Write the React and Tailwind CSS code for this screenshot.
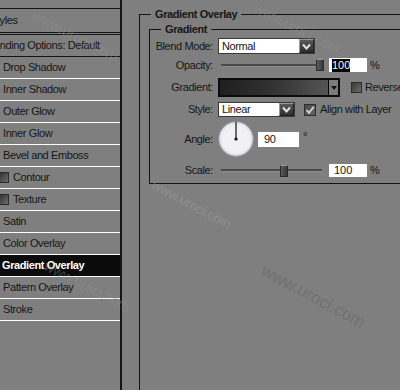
import React from "react";

function Chevron() {
  return (
    <div className="w-[15px] h-full shrink-0 bg-gradient-to-b from-[#5c5c5c] to-[#2e2e2e] border-l border-t border-[#9a9a9a] border-r border-b border-r-[#222] border-b-[#222] flex items-center justify-center">
      <svg width="9" height="7" viewBox="0 0 9 7">
        <polyline points="1,1.5 4.5,5.5 8,1.5" fill="none" stroke="#e2e2e2" strokeWidth="2" />
      </svg>
    </div>
  );
}

function Slider({ thumb }) {
  return (
    <div className="relative w-[101px] h-full flex items-center shrink-0">
      <div className="w-full h-[3px] bg-[#4a4a4a] border-b border-[#8e8e8e]" />
      <div
        className="absolute top-[1px] w-[8px] h-[12px] bg-gradient-to-r from-[#5a5a5a] to-[#3a3a3a] border border-[#2a2a2a] border-t-[#999]"
        style={{ left: thumb }}
      />
    </div>
  );
}

function Row({ label, className, children }) {
  return (
    <div className={"flex items-center " + className}>
      <div className="w-[63px] shrink-0 text-right">{label}</div>
      {children}
    </div>
  );
}

const rows = [
  "Drop Shadow",
  "Inner Shadow",
  "Outer Glow",
  "Inner Glow",
  "Bevel and Emboss",
  "Contour",
  "Texture",
  "Satin",
  "Color Overlay",
  "Gradient Overlay",
  "Pattern Overlay",
  "Stroke",
];

export default function App() {
  return (
    <div className="relative w-[400px] h-[390px] overflow-hidden bg-[#7f7f7f] flex text-[#161616] text-[11px] leading-[13px] tracking-[-0.4px] font-['Liberation_Sans',Arial,sans-serif]">
      {/* Left styles list */}
      <div className="w-[122px] shrink-0 h-full border-r-2 border-[#141414] pt-[8px] flex flex-col">
        <div className="h-[27px] border-t border-b-[3px] border-double border-[#141414] flex items-center overflow-hidden whitespace-nowrap">
          <span className="-ml-[10px]">Styles</span>
        </div>
        <div className="h-[22px] border-b border-[#141414] flex items-center overflow-hidden whitespace-nowrap">
          <span className="-ml-[15px]">Blending Options: Default</span>
        </div>
        {rows.map((r) => {
          const sel = r === "Gradient Overlay";
          const icon = r === "Contour" || r === "Texture";
          return (
            <div
              key={r}
              className={
                "h-[22px] border-b border-white flex items-center whitespace-nowrap " +
                (sel ? "bg-[#0b0b0b] text-white font-bold pl-[2px]" : icon ? "" : "pl-[3px]")
              }
            >
              {icon && (
                <div className="w-[9px] h-[11px] mr-[4px] bg-gradient-to-br from-[#333] to-[#6e6e6e] border border-[#2a2a2a] border-l-0" />
              )}
              <span>{r}</span>
            </div>
          );
        })}
      </div>

      {/* Right settings */}
      <div className="ml-[17px] shrink-0 w-[300px]">
        <fieldset className="mt-[8px] h-[400px] border border-[#141414]">
          <legend className="ml-[11px] px-[4px] font-bold text-[11px] leading-[13px]">Gradient Overlay</legend>
          <fieldset className="ml-[9px] mt-[2px] border border-[#141414] pb-[6px]">
            <legend className="ml-[11px] px-[4px] font-bold text-[11px] leading-[13px]">Gradient</legend>

            <Row label="Blend Mode:" className="mt-[2px] h-[16px]">
              <div className="ml-[5px] w-[97px] h-[16px] bg-white border border-[#3a3a3a] flex items-center">
                <span className="flex-1 pl-[3px]">Normal</span>
                <Chevron />
              </div>
            </Row>

            <Row label="Opacity:" className="mt-[4px] h-[14px]">
              <div className="ml-[8px] h-full flex">
                <Slider thumb={95} />
              </div>
              <div className="ml-[7px] w-[38px] h-[14px] bg-white flex items-center pl-[3px]">
                <span className="bg-black text-white tracking-normal">100</span>
              </div>
              <span className="ml-[3px]">%</span>
            </Row>

            <Row label="Gradient:" className="mt-[6px] h-[19px]">
              <div className="ml-[5px] w-[122px] h-[19px] border-2 border-[#0c0c0c] flex">
                <div className="flex-1 bg-gradient-to-r from-[#1f1f1f] via-[#333] to-[#555]" />
                <div className="w-[10px] bg-[#7c7c7c] border-l border-black flex items-center justify-center">
                  <svg width="6" height="4" viewBox="0 0 6 4">
                    <polygon points="0,0 6,0 3,4" fill="#111" />
                  </svg>
                </div>
              </div>
              <div className="ml-[11px] w-[11px] h-[11px] border border-[#2a2a2a] bg-gradient-to-br from-[#3a3a3a] to-[#6c6c6c]" />
              <span className="ml-[3px] whitespace-nowrap">Reverse</span>
            </Row>

            <Row label="Style:" className="mt-[5px] h-[15px]">
              <div className="ml-[5px] w-[77px] h-[15px] bg-white border border-[#3a3a3a] flex items-center">
                <span className="flex-1 pl-[3px]">Linear</span>
                <Chevron />
              </div>
              <div className="ml-[9px] w-[12px] h-[12px] bg-gradient-to-br from-[#4a4a4a] to-[#666] border border-[#2e2e2e] flex items-center justify-center">
                <svg width="10" height="10" viewBox="0 0 10 10">
                  <polyline points="1.5,5 4,7.8 8.8,1.8" fill="none" stroke="#d8d8d8" strokeWidth="1.8" />
                </svg>
              </div>
              <span className="ml-[4px] whitespace-nowrap">Align with Layer</span>
            </Row>

            <Row label="Angle:" className="mt-[4px] h-[36px]">
              <div className="ml-[5px] w-[36px] h-[36px]">
                <svg width="36" height="36" viewBox="0 0 36 36">
                  <circle cx="18" cy="18" r="17.3" fill="#f1f1f3" stroke="#8f93a6" strokeWidth="1.2" />
                  <circle cx="18" cy="18" r="15.5" fill="none" stroke="#dcdde4" strokeWidth="1" />
                  <line x1="18" y1="18" x2="18" y2="0.8" stroke="#111" strokeWidth="1.2" />
                  <circle cx="18" cy="18" r="1.6" fill="#111" />
                </svg>
              </div>
              <div className="ml-[4px] w-[41px] h-[15px] bg-white flex items-center pl-[6px]">90</div>
              <span className="ml-[4px] self-start mt-[9px]">°</span>
            </Row>

            <Row label="Scale:" className="mt-[7px] h-[13px]">
              <div className="ml-[8px] h-full flex">
                <Slider thumb={59} />
              </div>
              <div className="ml-[7px] w-[38px] h-[13px] bg-white flex items-center pl-[5px] tracking-normal">100</div>
              <span className="ml-[3px]">%</span>
            </Row>
          </fieldset>
        </fieldset>
      </div>

      {/* watermarks */}
      <span className="pointer-events-none absolute left-[28px] top-[30px] rotate-[27deg] text-[14px] text-[#939393] opacity-40 whitespace-nowrap tracking-normal">www.uroci.com</span>
      <span className="pointer-events-none absolute left-[250px] top-[22px] rotate-[27deg] text-[14px] text-[#939393] opacity-40 whitespace-nowrap tracking-normal">www.uroci.com</span>
      <span className="pointer-events-none absolute left-[148px] top-[198px] rotate-[28deg] text-[13px] text-[#9a9a9a] opacity-60 whitespace-nowrap tracking-normal">www.uroci.com</span>
      <span className="pointer-events-none absolute left-[256px] top-[290px] rotate-[28deg] text-[17px] text-[#6c6c6c] opacity-70 whitespace-nowrap tracking-normal">www.uroci.com</span>
      <span className="pointer-events-none absolute left-[40px] top-[280px] rotate-[27deg] text-[14px] text-[#939393] opacity-40 whitespace-nowrap tracking-normal">www.uroci.com</span>
    </div>
  );
}
